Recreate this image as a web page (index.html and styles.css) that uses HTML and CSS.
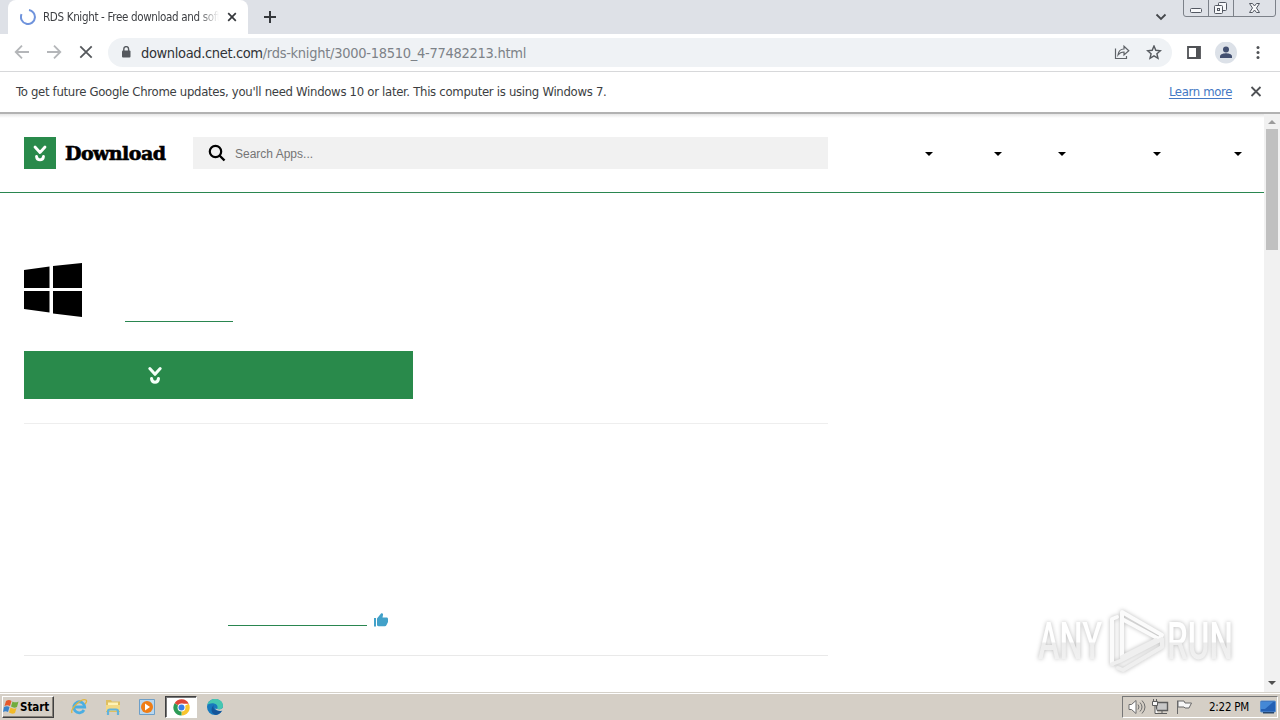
FILE: index.html
```html
<!DOCTYPE html>
<html lang="en">
<head>
<meta charset="utf-8">
<title>RDS Knight - Free download and software reviews</title>
<link rel="stylesheet" href="styles.css">
</head>
<body>
<div class="screen">
  <header class="tabstrip">
    <div class="tab">
      <svg class="spinner" width="16" height="16" viewBox="0 0 16 16"><path d="M8 1A7 7 0 1 1 2 4.300" transform="rotate(-8 8 8)" fill="none" stroke="#6f93dc" stroke-width="2" stroke-dasharray="0 2 40"/></svg>
      <span class="tab-title">RDS Knight - Free download and soft</span>
      <svg class="tab-close" width="10" height="10" viewBox="0 0 10 10"><path d="M1.2 1.2l7.6 7.6M8.8 1.2L1.2 8.8" stroke="#35383c" stroke-width="1.7"/></svg>
    </div>
    <svg class="newtab" width="14" height="14" viewBox="0 0 14 14"><path d="M7 1v12M1 7h12" stroke="#35383c" stroke-width="2"/></svg>
    <svg class="tabsearch" width="12" height="8" viewBox="0 0 12 8"><path d="M1.5 1.5L6 6l4.500-4.500" fill="none" stroke="#44474b" stroke-width="1.800"/></svg>
    <div class="winbuttons">
      <svg width="93" height="17" viewBox="0 0 93 17"><path d="M.5 0v14q0 2.500 2.500 2.500h87q2.500 0 2.500-2.500V0M25.500 0v16M50.500 0v16" fill="none" stroke="#7c8189"/><g fill="#f7f8fa" stroke="#535862"><rect x="7.500" y="8.500" width="11" height="4" rx="1"/><rect x="35.500" y="2.500" width="8" height="8" rx="1"/><rect x="31.500" y="5.500" width="8" height="8" rx="1"/><rect x="34.500" y="8.500" width="2" height="2"/><path d="M66.500 3.500h3l2 2.500 2-2.500h3l-3 4.500 3 4.500h-3l-2-2.500-2 2.500h-3l3-4.500z"/></g></svg>
    </div>
  </header>
  <nav class="toolbar">
    <svg class="nav-ic" width="16" height="16" viewBox="0 0 16 16"><path d="M15 7H2M8 .7L1.700 7 8 13.300" fill="none" stroke="#b4b6b9" stroke-width="1.800"/></svg>
    <svg class="nav-ic" width="16" height="16" viewBox="0 0 16 16"><path d="M1 7h13M8 .7L14.300 7 8 13.300" fill="none" stroke="#b4b6b9" stroke-width="1.800"/></svg>
    <svg class="nav-ic" width="16" height="16" viewBox="0 0 16 16"><path d="M2.300 1.300l11.400 11.400M13.700 1.300L2.300 12.700" stroke="#55585c" stroke-width="1.800"/></svg>
    <div class="omnibox">
      <svg class="lock" width="10" height="13" viewBox="0 0 10 13"><rect x="1" y="4.500" width="8.500" height="7" rx="1" fill="#55595e"/><path d="M2.800 5V3a2.400 2.400 0 0 1 4.800 0v2" fill="none" stroke="#55595e" stroke-width="1.400"/></svg>
      <span class="url"><b class="host">download.cnet.com</b>/rds-knight/3000-18510_4-77482213.html</span>
      <svg class="share" width="16" height="16" viewBox="0 0 16 16" fill="none" stroke="#5f6368" stroke-width="1.200"><path d="M1.500 3.500v10h11V11M4 10c.5-4 3-6 6-6V1.200l4.800 4.500L10 10V7C7.500 7 5.500 8 4 10z"/></svg>
      <svg class="star" width="16" height="16" viewBox="0 0 16 16"><path d="M8 1l1.800 4.300 4.700.4-3.600 3 1.100 4.600L8 10.900l-4 2.400 1.100-4.600-3.600-3 4.700-.4z" fill="none" stroke="#55595e" stroke-width="1.400"/></svg>
    </div>
    <svg class="panel" width="14" height="14" viewBox="0 0 14 14"><path d="M1 1h12v11H1z" fill="none" stroke="#505256" stroke-width="1.800"/><path d="M9 1h4v11H9z" fill="#505256"/></svg>
    <svg class="avatar" width="22" height="22" viewBox="0 0 22 22"><circle cx="11" cy="10.500" r="11" fill="#dce1e8"/><circle cx="11" cy="7.500" r="3" fill="#424f70"/><path d="M5 16v-1.500c0-2.500 4-3.200 6-3.200s6 .7 6 3.200V16z" fill="#424f70"/></svg>
    <svg class="menu" width="4" height="14" viewBox="0 0 4 14" fill="#505256"><circle cx="2" cy="1.500" r="1.500"/><circle cx="2" cy="6.500" r="1.500"/><circle cx="2" cy="11.500" r="1.500"/></svg>
  </nav>
  <div class="infobar">
    <span class="info-text">To get future Google Chrome updates, you'll need Windows 10 or later. This computer is using Windows 7.</span>
    <span class="learn">Learn more</span>
    <svg class="info-close" width="12" height="12" viewBox="0 0 12 12"><path d="M1.500 2l9 9M10.500 2l-9 9" stroke="#505256" stroke-width="1.800"/></svg>
  </div>
  <div class="viewport">
    <main class="page">
      <div class="site-header">
        <div class="logo"><svg width="16" height="20" viewBox="0 0 16 20" fill="none" stroke="#fff" stroke-width="2.800" stroke-linecap="round" stroke-linejoin="round"><path d="M3 4l5 5.500L13 4M4.500 13.500c.5 4.500 6.500 4.500 7 0"/></svg></div>
        <span class="brand">Download</span>
        <div class="search">
          <svg width="18" height="18" viewBox="0 0 18 18"><circle cx="7.500" cy="7.500" r="5.700" fill="none" stroke="#000" stroke-width="2.200"/><path d="M11.500 11.500l5 5" stroke="#000" stroke-width="2.400"/></svg>
          <span class="placeholder">Search Apps...</span>
        </div>
        <div class="carets"><i class="caret"></i><i class="caret c2"></i><i class="caret c3"></i><i class="caret c4"></i><i class="caret c5"></i></div>
      </div>
      <section class="app">
        <div class="app-head">
          <svg width="58" height="54" viewBox="0 0 58 54"><path d="M0 7L25.500 3.500V25H0zM29 3L58 0v25H29zM0 28h25.500v21.500L0 46zM29 28h29v26l-29-3.500z"/></svg>
          <span class="publisher"></span>
        </div>
        <div class="cta"><svg width="16" height="20" viewBox="0 0 16 20" fill="none" stroke="#f4fff8" stroke-width="3" stroke-linecap="round" stroke-linejoin="round"><path d="M2.800 3.500L8 9.300l5.200-5.800M4.500 13.500c.5 5 6.500 5 7 0"/></svg></div>
        <div class="review">
          <span class="review-link"></span>
          <svg width="14" height="14" viewBox="0 0 14 14" fill="#42a1c9"><path d="M0 5h2v8.500H0zM3 12.500V5.500L7 .6c1-1 2.300 0 2 1.300L8.500 4.500h4c1 0 1.500.7 1.500 1.500v3L12.500 12q-.5 1.300-1.700 1.300H4.500z"/></svg>
        </div>
      </section>
      <svg class="watermark" width="210" height="76" viewBox="0 0 210 76">
        <defs><linearGradient id="wm" x1="0" y1="18" x2="0" y2="56" gradientUnits="userSpaceOnUse"><stop offset="0" stop-color="#fff"/><stop offset=".52" stop-color="#fff"/><stop offset=".56" stop-color="#ededed"/><stop offset="1" stop-color="#f1f1f1"/></linearGradient></defs>
        <g class="wm-shadow">
          <g class="wm-text" fill="url(#wm)">
            <text x="5" y="55" textLength="64" lengthAdjust="spacingAndGlyphs">ANY</text>
            <text x="134" y="55" textLength="66" lengthAdjust="spacingAndGlyphs">RUN</text>
          </g>
          <g fill="none" stroke-width="4" stroke-linejoin="round" stroke-linecap="round">
            <path stroke="#fbfbfb" d="M79 60V15l5-2M89 53V8l40 23-3 4-37-20"/>
            <path stroke="#efefef" d="M79 60l8-3 42-22M85 64l5 2 39-23V35M89 53l34-17"/>
          </g>
        </g>
      </svg>
    </main>
    <div class="scrollbar">
      <svg width="16" height="15" viewBox="0 0 16 15"><path d="M4 10l4-4 4 4z" fill="#9b9b9b"/></svg>
      <div class="thumb"></div>
      <svg class="sb-down" width="16" height="17" viewBox="0 0 16 17"><path d="M4 6h8l-4 4z" fill="#505050"/></svg>
    </div>
  </div>
  <footer class="taskbar">
    <div class="start">
      <svg width="17" height="16" viewBox="0 0 17 16"><path d="M3 2q3-2 5.500 0L7 7Q4.500 5.500 1.500 7z" fill="#e6592c"/><path d="M9.500 2.500q3 1.700 6 0L14 8q-3 1.500-6-.5z" fill="#72ac3c"/><path d="M1 8q3-1.500 5.500 0L5 13q-2.500-1.500-5 0z" fill="#3a83cb"/><path d="M7.500 8.500q3 2 6 .5L12 14q-3 1.500-6-.5z" fill="#f2ba28"/></svg>
      <span>Start</span>
    </div>
    <div class="quick">
      <div class="task"><svg width="18" height="18" viewBox="0 0 18 18"><path d="M14 12a5.500 5.500 0 1 1 .7-3H5" fill="none" stroke="#4baee2" stroke-width="2.800"/><path d="M2 15C0 11 11 0 16 2c1 1 0 3-1 4" fill="none" stroke="#e0b640" stroke-width="1.300"/></svg></div>
      <div class="task"><svg width="18" height="18" viewBox="0 0 18 18"><path d="M2 2h5l1 1.500h8V14H2z" fill="#dfbf60"/><path d="M4 4.500h10v5H4z" fill="#fff3b6"/><path d="M2 7h14v6H2z" fill="#f3d985"/><path d="M4 17v-4q0-1.500 2-1.500h6q2 0 2 1.500v4" fill="none" stroke="#61b3dc" stroke-width="2.200"/></svg></div>
      <div class="task"><svg width="18" height="18" viewBox="0 0 18 18"><path d="M1.500 1.500h15v15h-15z" fill="#b9d7ef" stroke="#6d9fc8"/><circle cx="9" cy="9" r="6" fill="#ef7d16"/><path d="M7 5.500v7l5-3.500z" fill="#fff"/></svg></div>
      <div class="task active"><svg width="17" height="17" viewBox="0 0 18 18"><path d="M9 9L1.700 4.500A8.500 8.500 0 0 1 16.700 5L9 5z" fill="#df4637"/><path d="M9 9l7.700-4A8.500 8.500 0 0 1 9 17.500z" fill="#f9c52d"/><path d="M9 9v8.500A8.500 8.500 0 0 1 1.700 4.500z" fill="#2d9b56"/><circle cx="9" cy="9" r="4.200" fill="#fff"/><circle cx="9" cy="9" r="3.200" fill="#397ee8"/></svg></div>
      <div class="task"><svg width="18" height="18" viewBox="0 0 18 18"><circle cx="9" cy="9" r="8" fill="#1879bd"/><path d="M1.500 7C3-1 17-1 17 8c0 3-3 4-6 3 1-1 1-5-3-5.500C5 5 2.500 6 1.500 7z" fill="#45c7b1"/><path d="M8 7c-2 3 1 7 8 5.500-1 2-3 4-6 4.400C5 16 4 10 8 7z" fill="#165599"/><path d="M11 11c2 1 5 .5 6-1.500v3c-3 1-7 0-8-2z" fill="#d6d0c7"/></svg></div>
    </div>
    <div class="tray">
      <svg width="18" height="16" viewBox="0 0 18 16" fill="none" stroke="#6c6c6c"><path d="M1 5.500h2.500L8 1.500v13l-4.500-4H1z" fill="#fff"/><path d="M10 5.500q2 2.500 0 5M12 3.500q4 4.500 0 9M14 1.500q6 6.500 0 13"/></svg>
      <svg width="18" height="16" viewBox="0 0 18 16" stroke="#5c5c5c"><path d="M4.500 3.500h11v8h-11z" fill="#c8c8c8" stroke-width="1.400"/><path d="M6 14.500h9M10 12v2"/><path d="M.5 2.500h5v4h-5zM1.500 0v3M4.500 0v3M3 7v7.500h3" fill="#f7f7f7"/></svg>
      <svg width="18" height="16" viewBox="0 0 18 16"><path d="M1.500 15V1.500M2 2h6l1 2h6.500L13 9H9L8 8H2z" fill="#f6f6f6" stroke="#696969"/></svg>
      <span class="clock">2:22 PM</span>
      <svg class="desktop" width="16" height="14" viewBox="0 0 16 14"><rect x=".5" y="1" width="15" height="11" rx="1" fill="#2460b4" stroke="#5e93d0"/><path d="M1 2h12L5 9H1z" fill="#4488d6"/><path d="M3 12h11v1.500H3z" fill="#26466d"/></svg>
    </div>
  </footer>
</div>
</body>
</html>
```

FILE: styles.css
```css
* { box-sizing: border-box; }
body { margin: 0; font-family: "DejaVu Sans Condensed", "DejaVu Sans", sans-serif; font-stretch: condensed; }
svg { display: block; flex: none; }
.screen { width: 1280px; height: 720px; display: flex; flex-direction: column; overflow: hidden; background: #fff; }
.tabstrip { height: 34px; flex: none; display: flex; align-items: flex-start; background: #dee1e7; }
.tab { width: 240px; height: 34px; margin-left: 8px; padding-left: 12px; display: flex; align-items: center; background: #fff; border-radius: 8px 8px 0 0; }
.tab-title { width: 176px; margin-left: 7px; overflow: hidden; white-space: nowrap; font-size: 11.500px; letter-spacing: -.33px; color: #3c3e42; -webkit-mask-image: linear-gradient(to right, #000 88%, transparent); mask-image: linear-gradient(to right, #000 88%, transparent); }
.tab-close { margin-left: 8px; }
.newtab { margin: 10px 0 0 15px; }
.tabsearch { margin: 13px 16px 0 auto; }
.winbuttons { margin-right: 4px; }
.toolbar { height: 38px; flex: none; display: flex; align-items: center; padding-left: 14px; border-bottom: 1px solid #d7d8da; background: #fff; }
.nav-ic { margin-right: 16px; }
.omnibox { width: 1064px; height: 29px; margin-left: -2px; padding: 0 10px 0 13px; display: flex; align-items: center; border-radius: 15px; background: #eff2f5; }
.url { margin-left: 10px; font-size: 14.500px; letter-spacing: -.28px; color: #7d8288; white-space: nowrap; }
.host { font-weight: normal; letter-spacing: -.36px; color: #303337; }
.share { margin-left: auto; margin-right: 16px; }
.panel { margin-left: 15px; }
.avatar { margin-left: 14px; }
.menu { margin-left: 19px; }
.infobar { height: 42px; flex: none; display: flex; align-items: center; padding: 0 18px 2px 16px; border-bottom: 2px solid #b2b2b2; font-size: 13px; color: #3c3e42; }
.info-text { white-space: nowrap; letter-spacing: -.3px; }
.learn { margin-left: auto; margin-right: 18px; color: #4478c4; text-decoration: underline; text-underline-offset: 2px; letter-spacing: -.35px; white-space: nowrap; }
.viewport { height: 578px; flex: none; display: flex; background: linear-gradient(#e5e5e5, #fff 4px); }
.page { width: 1264px; position: relative; }
.site-header { height: 79px; display: flex; align-items: center; padding-left: 24px; border-bottom: 1px solid #2a8650; }
.logo { width: 32px; height: 32px; display: flex; align-items: center; justify-content: center; background: #298a4b; }
.brand { width: 128px; margin-left: 9px; font-family: "DejaVu Serif", serif; font-stretch: normal; font-weight: bold; font-size: 19px; letter-spacing: -.55px; color: #000; -webkit-text-stroke: .6px #000; }
.search { width: 635px; height: 32px; padding-left: 15px; display: flex; align-items: center; gap: 9px; background: #f1f1f1; }
.placeholder { font-family: "Liberation Sans", sans-serif; font-stretch: normal; font-size: 12px; color: #757575; padding-top: 2px; }
.carets { display: flex; margin-left: 97px; padding-top: 2px; }
.caret { width: 8px; height: 4px; background: #000; clip-path: polygon(0 0, 100% 0, 50% 100%); }
.c2 { margin-left: 61px; }
.c3 { margin-left: 56px; }
.c4 { margin-left: 87px; }
.c5 { margin-left: 73px; }
.app { width: 804px; margin-left: 24px; padding-top: 70px; }
.app-head { height: 88px; display: flex; align-items: flex-start; }
.publisher { width: 108px; height: 59px; margin-left: 43px; border-bottom: 1px solid #2a8650; }
.cta { width: 389px; height: 48px; display: flex; align-items: center; padding-left: 123px; background: #298a4b; }
.review { height: 233px; margin-top: 24px; padding: 0 0 28px 204px; display: flex; align-items: flex-end; border-top: 1px solid #eee; border-bottom: 1px solid #e9e9e9; }
.review-link { width: 139px; height: 1px; margin: 0 7px 1px 0; background: #2a8650; }
.watermark { position: absolute; left: 1033px; top: 490px; }
.wm-shadow { filter: drop-shadow(0 0 2px #bbb); }
.wm-text { font-family: Roboto, sans-serif; font-stretch: normal; font-size: 52px; font-weight: 500; }
.scrollbar { width: 16px; display: flex; flex-direction: column; background: #f1f1f1; }
.thumb { width: 12px; height: 121px; margin-left: 2px; background: #c0c0c0; }
.sb-down { margin-top: auto; }
.taskbar { height: 28px; flex: none; display: flex; padding: 3px 2px 2px; border-top: 1px solid #d5d1c9; background: #d5cfc6; box-shadow: inset 0 1px #fff; }
.start { width: 52px; height: 22px; display: flex; align-items: center; border: 1px solid; border-color: #fff #404040 #404040 #fff; box-shadow: inset -1px -1px #858078; font-weight: bold; font-size: 11.500px; letter-spacing: -.05px; color: #000; }
.quick { display: flex; margin-left: 9px; }
.task { width: 32px; height: 22px; margin-right: 2px; display: flex; align-items: center; justify-content: center; border: 1px solid transparent; }
.active { background: #fff; border-color: #404040 #fff #fff #404040; box-shadow: inset 1px 1px #777; }
.tray { width: 156px; height: 22px; margin-left: auto; padding-left: 5px; display: flex; align-items: center; gap: 6px; border: 1px solid; border-color: #777 #fff #fff #777; }
.clock { width: 42px; margin-left: 9px; font-size: 11.500px; letter-spacing: -.25px; color: #000; white-space: nowrap; }
.desktop { margin-left: 3px; }
```
